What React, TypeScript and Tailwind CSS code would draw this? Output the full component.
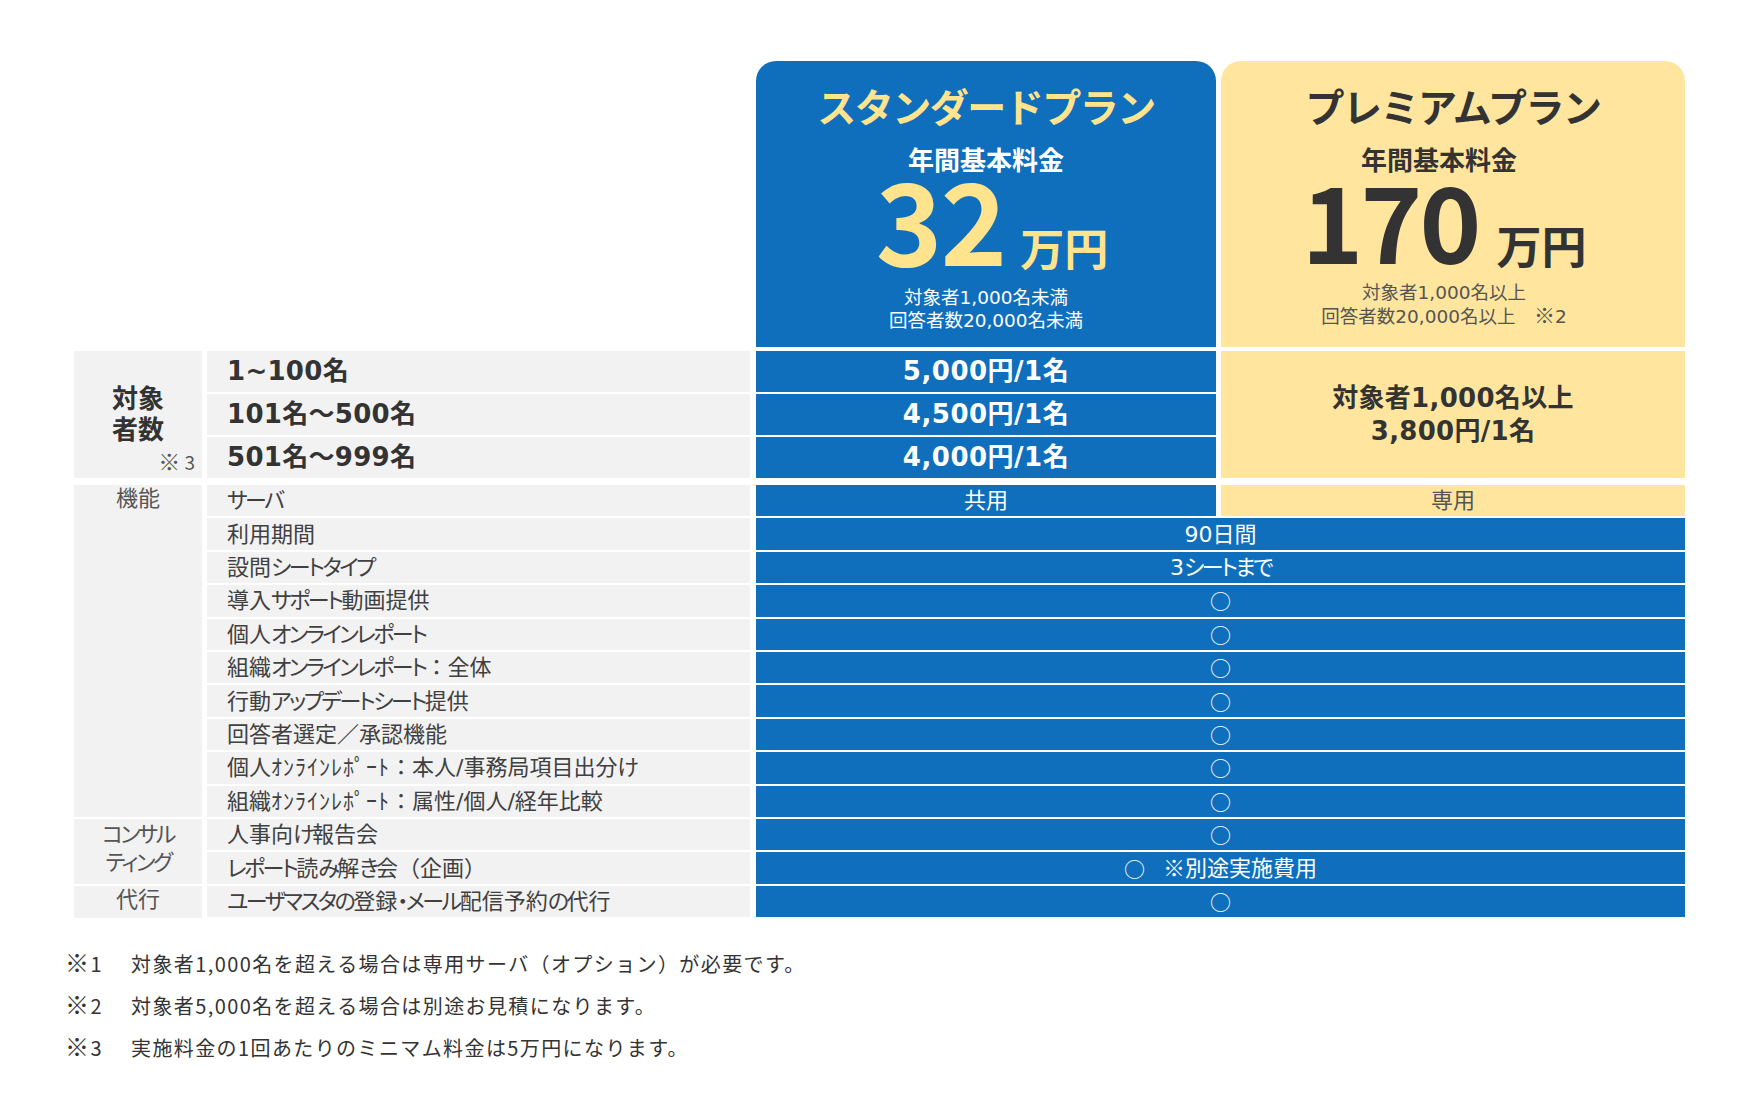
import React from 'react';

type Row = { name: string; value?: React.ReactNode; split?: boolean };
type Group = { label: string[]; rows: Row[] };

// Kana set tighter (proportional), half-width kana slightly spaced, kanji at full width
const J = ({ text }: { text: string }) => {
  const parts = text.split(/([\u3041-\u30ff]+|[\uff61-\uff9f]+)/);
  return (
    <>
      {parts.map((p, i) => {
        if (!p) return null;
        if (/^[\u3041-\u30ff]+$/.test(p))
          return (
            <span key={i} className="[font-feature-settings:'palt'] tracking-[-2.5px]">
              {p}
            </span>
          );
        if (/^[\uff61-\uff9f]+$/.test(p))
          return (
            <span key={i} className="tracking-[1px]">
              {p}
            </span>
          );
        return <span key={i}>{p}</span>;
      })}
    </>
  );
};

const Maru = () => (
  <span className="font-['Noto_Sans_CJK_JP',sans-serif] text-[21px] leading-none">○</span>
);

const Kome = ({ className = 'text-[25px]' }: { className?: string }) => (
  <span className={`font-['Noto_Sans_CJK_JP',sans-serif] leading-none ${className}`}>※</span>
);

const groups: Group[] = [
  {
    label: ['機能'],
    rows: [
      { name: 'サーバ', split: true },
      { name: '利用期間', value: '90日間' },
      { name: '設問シートタイプ', value: '3シートまで' },
      { name: '導入サポート動画提供', value: <Maru /> },
      { name: '個人オンラインレポート', value: <Maru /> },
      { name: '組織オンラインレポート：全体', value: <Maru /> },
      { name: '行動アップデートシート提供', value: <Maru /> },
      { name: '回答者選定／承認機能', value: <Maru /> },
      { name: '個人ｵﾝﾗｲﾝﾚﾎﾟｰﾄ：本人/事務局項目出分け', value: <Maru /> },
      { name: '組織ｵﾝﾗｲﾝﾚﾎﾟｰﾄ：属性/個人/経年比較', value: <Maru /> },
    ],
  },
  {
    label: ['コンサル', 'ティング'],
    rows: [
      { name: '人事向け報告会', value: <Maru /> },
      {
        name: 'レポート読み解き会（企画）',
        value: (
          <span className="flex items-center">
            <Maru />
            <span className="ml-[18px]">
              <Kome className="text-[22px]" />
              別途実施費用
            </span>
          </span>
        ),
      },
    ],
  },
  {
    label: ['代行'],
    rows: [{ name: 'ユーザマスタの登録・メール配信予約の代行', value: <Maru /> }],
  },
];

const tiers = [
  { range: '1~100名', price: '5,000円/1名' },
  { range: '101名～500名', price: '4,500円/1名' },
  { range: '501名～999名', price: '4,000円/1名' },
];

const notes = [
  { mark: '1', text: '対象者1,000名を超える場合は専用サーバ（オプション）が必要です。' },
  { mark: '2', text: '対象者5,000名を超える場合は別途お見積になります。' },
  { mark: '3', text: '実施料金の1回あたりのミニマム料金は5万円になります。' },
];

const App = () => {
  return (
    <div className="min-h-screen bg-white font-['DejaVu_Sans','Noto_Sans_CJK_JP',sans-serif] text-[#404040]">
      <div className="pt-[61px] pl-[74px]">
        {/* Plan headers */}
        <div className="flex">
          <div className="w-[682px] shrink-0" />
          <div className="w-[460px] h-[286px] shrink-0 rounded-t-[20px] bg-[#0f6fbd] flex flex-col items-center">
            <div className="mt-[20px] font-['Noto_Sans_CJK_JP',sans-serif] text-[39px] leading-[48px] font-bold tracking-[-1.5px] text-[#ffe38d]">
              スタンダードプラン
            </div>
            <div className="mt-[15px] font-['Noto_Sans_CJK_JP',sans-serif] text-[26px] leading-[30px] font-bold text-white">
              年間基本料金
            </div>
            <div className="ml-[12px] flex items-baseline font-['Noto_Sans_CJK_JP',sans-serif] font-bold text-[#ffe38d]">
              <span className="text-[113px] leading-[86px] tracking-[-2px]">32</span>
              <span className="ml-[15px] text-[44px] leading-[20px]">万円</span>
            </div>
            <div className="mt-[26px] text-center text-[18.5px] leading-[23px] text-white">
              <div>対象者1,000名未満</div>
              <div>回答者数20,000名未満</div>
            </div>
          </div>
          <div className="ml-[5px] w-[464px] h-[286px] shrink-0 rounded-t-[20px] bg-[#ffe59e] flex flex-col items-center">
            <div className="mt-[20px] font-['Noto_Sans_CJK_JP',sans-serif] text-[39px] leading-[48px] font-bold tracking-[-1.5px] text-[#333333]">
              プレミアムプラン
            </div>
            <div className="mt-[15px] mr-[28px] font-['Noto_Sans_CJK_JP',sans-serif] text-[26px] leading-[30px] font-bold text-[#333333]">
              年間基本料金
            </div>
            <div className="mt-[4px] mr-[18px] flex items-baseline font-['Noto_Sans_CJK_JP',sans-serif] font-bold text-[#333333]">
              <span className="text-[105px] leading-[80px] tracking-[-3px]">170</span>
              <span className="ml-[18px] text-[45px] leading-[20px]">万円</span>
            </div>
            <div className="mt-[23px] mr-[18px] text-center text-[18.5px] leading-[23px] text-[#555555]">
              <div>対象者1,000名以上</div>
              <div>
                回答者数20,000名以上　<Kome className="text-[21px]" />2
              </div>
            </div>
          </div>
        </div>

        {/* Tier pricing */}
        <div className="mt-[4px] flex h-[127px]">
          <div className="w-[128px] shrink-0 bg-[#f2f2f2] flex flex-col justify-end pb-[1px] font-bold text-[#333333]">
            <div className="text-center text-[26px] leading-[31px]">対象</div>
            <div className="text-center text-[26px] leading-[31px]">者数</div>
            <div className="pr-[7px] text-right font-['Noto_Sans_CJK_JP',sans-serif] text-[19px] leading-[31px] font-normal text-[#555555]">
              <Kome className="text-[22px]" /> 3
            </div>
          </div>
          <div className="ml-[5px] w-[543px] shrink-0 flex flex-col gap-[2px]">
            {tiers.map((t) => (
              <div
                key={t.range}
                className="flex-1 bg-[#f2f2f2] flex items-center pl-[20px] text-[26px] tracking-[0.3px] font-bold text-[#333333]"
              >
                {t.range}
              </div>
            ))}
          </div>
          <div className="ml-[6px] w-[460px] shrink-0 flex flex-col gap-[2px]">
            {tiers.map((t) => (
              <div
                key={t.price}
                className="flex-1 bg-[#0f6fbd] flex items-center justify-center text-[26px] tracking-[0.5px] font-bold text-white"
              >
                {t.price}
              </div>
            ))}
          </div>
          <div className="ml-[5px] w-[464px] shrink-0 bg-[#ffe59e] flex flex-col items-center justify-center text-[26px] leading-[33px] tracking-[0.3px] font-bold text-[#333333]">
            <div>対象者1,000名以上</div>
            <div>3,800円/1名</div>
          </div>
        </div>

        {/* Feature table */}
        <div className="mt-[7px] flex flex-col gap-[2px] text-[22px]">
          {groups.map((g) => (
            <div key={g.label.join('')} className="flex">
              <div
                className={
                  g.rows.length > 2
                    ? 'w-[128px] shrink-0 bg-[#f2f2f2] text-center leading-[28px] text-[#555555]'
                    : 'w-[128px] shrink-0 bg-[#f2f2f2] flex flex-col justify-center pb-[4px] text-center leading-[28px] text-[#555555]'
                }
              >
                {g.label.map((l) => (
                  <div key={l}>
                    <J text={l} />
                  </div>
                ))}
              </div>
              <div className="ml-[5px] flex flex-col gap-[2px]">
                {g.rows.map((r) => (
                  <div key={r.name} className="flex h-[31.4px]">
                    <div className="w-[543px] shrink-0 bg-[#f2f2f2] flex items-center pl-[20px] text-[#404040]">
                      <J text={r.name} />
                    </div>
                    {r.split ? (
                      <>
                        <div className="ml-[6px] w-[460px] shrink-0 bg-[#0f6fbd] flex items-center justify-center text-white">
                          共用
                        </div>
                        <div className="ml-[5px] w-[464px] shrink-0 bg-[#ffe59e] flex items-center justify-center text-[#555555]">
                          専用
                        </div>
                      </>
                    ) : (
                      <div className="ml-[6px] w-[929px] shrink-0 bg-[#0f6fbd] flex items-center justify-center text-white">
                        {typeof r.value === 'string' ? <J text={r.value} /> : r.value}
                      </div>
                    )}
                  </div>
                ))}
              </div>
            </div>
          ))}
        </div>

        {/* Notes */}
        <div className="mt-[32px] -ml-[9px] flex flex-col gap-[16px] font-['Noto_Sans_CJK_JP',sans-serif] text-[20px] leading-[24px] tracking-[1.4px] text-[#333333]">
          {notes.map((n) => (
            <div key={n.mark} className="flex items-baseline">
              <span className="w-[66px] shrink-0">
                <Kome className="text-[24px]" />
                {n.mark}
              </span>
              <span>{n.text}</span>
            </div>
          ))}
        </div>
      </div>
    </div>
  );
};

export default App;
